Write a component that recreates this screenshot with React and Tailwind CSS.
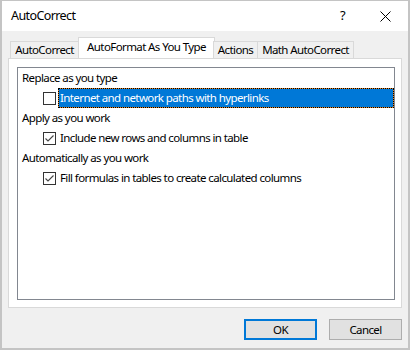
import React from 'react';

const font = { fontFamily: '"Noto Sans", "Segoe UI", Arial, sans-serif', letterSpacing: '-0.6px' };

// --- Checkbox in the Win10 style ---
const Check = ({ checked }) => (
    <div className="w-[13px] h-[13px] border border-[#333333] bg-white flex items-center justify-center shrink-0">
        {checked && (
            <svg width="11" height="11" viewBox="0 0 11 11">
                <path d="M1.5 5.5 L4 8 L9.5 2.5" fill="none" stroke="#444444" strokeWidth="1.1" />
            </svg>
        )}
    </div>
);

const Heading = ({ children }) => (
    <div className="h-5 flex items-center pl-[4px] text-black">{children}</div>
);

const Option = ({ checked, selected, children }) => (
    <div className="h-5 flex items-center pl-[25px]">
        <Check checked={checked} />
        {selected ? (
            <div className="ml-[2px] flex-1 h-5 border border-dotted border-black bg-[#e0862a]">
                <div className="h-full bg-[#0078d7] text-white flex items-center pl-[1px]">{children}</div>
            </div>
        ) : (
            <div className="ml-[2px] pl-[2px] text-black">{children}</div>
        )}
    </div>
);

const tabs = [
    { label: 'AutoCorrect', w: 'w-[69px]' },
    { label: 'AutoFormat As You Type', w: 'w-[137px]', active: true },
    { label: 'Actions', w: 'w-[45px]' },
    { label: 'Math AutoCorrect', w: 'w-[97px]' },
];

export default function App() {
    return (
        <div style={font} className="w-[410px] h-[350px] border-2 border-[#c4c4c4] border-t bg-[#f0f0f0] flex flex-col text-[11.5px] overflow-hidden">
            {/* title bar */}
            <div className="h-[30px] bg-white flex items-center shrink-0">
                <span className="pl-[9px] text-[12.5px] text-black">AutoCorrect</span>
                <span className="ml-auto mr-[35px] text-[13px] text-black">?</span>
                <svg width="11" height="11" viewBox="0 0 11 11" className="mr-[17px]">
                    <path d="M0.5 0.5 L10.5 10.5 M10.5 0.5 L0.5 10.5" stroke="#000" strokeWidth="1" />
                </svg>
            </div>

            <div className="flex-1 flex flex-col px-[6px] pt-[7px]">
                {/* tab strip */}
                <div className="flex items-end h-[20px] pl-[2px] relative z-10 whitespace-nowrap">
                    {tabs.map((t) =>
                        t.active ? (
                            <div key={t.label} className={`${t.w} h-[21px] -mx-[1px] bg-white border border-b-0 border-[#d9d9d9] flex items-center justify-center text-black pb-[2px]`}>
                                {t.label}
                            </div>
                        ) : (
                            <div key={t.label} className={`${t.w} h-[17px] bg-[#f0f0f0] border border-b-0 border-[#d9d9d9] -ml-px first:ml-0 flex items-center justify-center text-black`}>
                                {t.label}
                            </div>
                        )
                    )}
                </div>

                {/* tab panel */}
                <div className="h-[250px] bg-white border border-[#d9d9d9] p-[8px] pr-[6px]">
                    <div className="h-[233px] border border-[#828790] bg-white">
                        <Heading>Replace as you type</Heading>
                        <Option selected>Internet and network paths with hyperlinks</Option>
                        <Heading>Apply as you work</Heading>
                        <Option checked>Include new rows and columns in table</Option>
                        <Heading>Automatically as you work</Heading>
                        <Option checked>Fill formulas in tables to create calculated columns</Option>
                    </div>
                </div>

                {/* buttons */}
                <div className="flex justify-end gap-[12px] mt-[11px]">
                    <button className="w-[73px] h-[21px] border-2 border-[#0078d7] bg-[#e1e1e1] text-black">OK</button>
                    <button className="w-[73px] h-[21px] border border-[#adadad] bg-[#e1e1e1] text-black">Cancel</button>
                </div>
            </div>
        </div>
    );
}
